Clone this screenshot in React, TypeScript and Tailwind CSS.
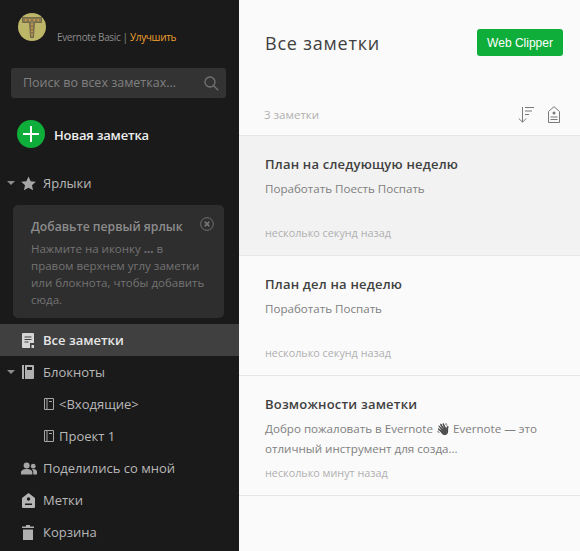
import { ReactNode } from "react";

const Caret = () => (
  <svg width="8" height="4" viewBox="0 0 8 4" className="fill-[#8c8c8c]">
    <path d="M0 0h8L4 4z" />
  </svg>
);

const StarIcon = () => (
  <svg width="15" height="15" viewBox="0 0 16 15" className="fill-[#a6a6a6]">
    <path d="M8 0l2.3 5 5.5.6-4.1 3.7 1.2 5.4L8 12l-4.9 2.7 1.2-5.4L.2 5.600 5.700 5z" />
  </svg>
);

const NotesIcon = () => (
  <svg width="12" height="15" viewBox="0 0 12 15" className="ml-px">
    <path d="M1 0h10a1 1 0 0 1 1 1v9H8v5H1a1 1 0 0 1-1-1V1a1 1 0 0 1 1-1z" fill="#d6d6d6" />
    <path d="M2.500 4h7M2.500 6.500h7M2.500 9h4" stroke="#404040" />
    <path d="M9.500 12H12v3H9.500z" fill="#d6d6d6" />
  </svg>
);

const NotebookIcon = () => (
  <svg width="12" height="14" viewBox="0 0 12 14" className="ml-px fill-[#b0b0b0]">
    <path d="M0 0h2v14H0zM3 0h8a1 1 0 0 1 1 1v12a1 1 0 0 1-1 1H3z" />
    <path d="M5 2h5v3H5z" fill="#1a1a1a" />
  </svg>
);

const SmallNotebook = () => (
  <svg width="10" height="12" viewBox="0 0 10 12" fill="none" stroke="#a6a6a6">
    <path d="M.5.5h9v11h-9zM3 .5v11M5 3.500h3" />
  </svg>
);

const PeopleIcon = () => (
  <svg width="16" height="13" viewBox="0 0 17 13" className="fill-[#a6a6a6]">
    <circle cx="6" cy="3.200" r="3.200" />
    <path d="M0 13v-2.500C0 8.500 2.500 7 6 7s6 1.500 6 3.500V13z" />
    <circle cx="13" cy="4" r="2.500" />
    <path d="M13 13v-3c0-1-.5-2-1.500-2.700.5-.2 1-.3 1.700-.3 2.200 0 3.800 1.200 3.800 3v3z" />
  </svg>
);

const TagIcon = ({ outline }: { outline?: boolean }) =>
  outline ? (
    <svg width="12" height="17" viewBox="0 0 12 17" fill="none" stroke="#7a7a7a">
      <path d="M.5 5.500L6 .7l5.500 4.800v11H.5z" />
      <circle cx="6" cy="7" r="1.500" fill="#7a7a7a" stroke="none" />
      <path d="M2.500 11h7M2.500 13.500h7" />
    </svg>
  ) : (
    <svg width="13" height="15" viewBox="0 0 13 15" className="ml-px">
      <path d="M0 5l6.500-5L13 5v9a1 1 0 0 1-1 1H1a1 1 0 0 1-1-1z" fill="#b5b5b5" />
      <circle cx="6.500" cy="6" r="1.700" fill="#1a1a1a" />
      <path d="M3 10.500h7V12H3z" fill="#1a1a1a" />
    </svg>
  );

const TrashIcon = () => (
  <svg width="12" height="15" viewBox="0 0 12 15" className="ml-px fill-[#b0b0b0]">
    <path d="M4 0h4v1.500h4V3H0V1.500h4zM1 4.500h10V15H1z" />
  </svg>
);

const SidebarRow = ({
  icon,
  label,
  caret,
  active,
}: {
  icon: ReactNode;
  label: string;
  caret?: boolean;
  active?: boolean;
}) => (
  <div
    className={`h-8 flex items-center text-[13px] ${active ? "bg-[#404040] text-[#e6e6e6] font-semibold" : "text-[#b8b8b8]"}`}
  >
    <div className="w-[21px] flex justify-end pr-1.5">{caret && <Caret />}</div>
    <div className="w-[22px] flex justify-start">{icon}</div>
    <span className="pt-0.5">{label}</span>
  </div>
);

const SubRow = ({ label }: { label: string }) => (
  <div className="h-8 flex items-center pl-[44px] gap-[5px] text-[13px] text-[#b8b8b8]">
    <SmallNotebook />
    <span className="pt-0.5">{label}</span>
  </div>
);

const NoteCard = ({
  title,
  body,
  time,
  selected,
}: {
  title: string;
  body: ReactNode;
  time: string;
  selected?: boolean;
}) => (
  <div
    className={`h-[120px] border-b border-[#e6e6e6] pl-[26px] pr-4 pt-[18px] flex flex-col ${selected ? "bg-[#f2f2f2]" : ""}`}
  >
    <div className="text-[13px] tracking-[0.2px] font-semibold text-[#404040] leading-[20px]">{title}</div>
    <div className="text-[11.6px] text-[#808080] leading-[20px] mt-[5px] h-[40px]">{body}</div>
    <div className="text-[10.8px] text-[#b0b0b0] leading-[14px] mt-[7px]">{time}</div>
  </div>
);

export default function App() {
  return (
    <div className="w-[580px] h-[551px] flex overflow-hidden bg-[#fafafa] font-['Open_Sans',sans-serif]">
      <aside className="w-[239px] shrink-0 bg-[#1a1a1a] flex flex-col">
        <div className="h-[68px] pl-[18px] pt-[13px] flex items-start">
          <svg width="28" height="28" viewBox="0 0 28 28">
            <circle cx="14" cy="14" r="14" fill="#bdb668" />
            <path d="M4.500 4.500h19v5h-7l-1 15h-3l-1-15h-7z" fill="#8a7a52" stroke="#5f5544" strokeWidth="0.7" />
            <path d="M7 7h1.500M11 7h1.500M15.500 7h1.500M19.500 7h1.500M14 10.500v1.500M14 14v1.500M14 17.500v1.500M14 21v1.500" stroke="#e0a83a" strokeWidth="1.300" />
          </svg>
          <div className="ml-[11px] mt-[17px] text-[10px] tracking-[-0.35px] leading-[14px] text-[#8c8c8c]">
            Evernote Basic | <span className="text-[#f0a030]">Улучшить</span>
          </div>
        </div>
        <div className="ml-[11px] mr-[13px] h-[30px] bg-[#333333] rounded-[3px] flex items-center pl-3 pr-[7px] justify-between">
          <span className="text-[12.5px] text-[#808080]">Поиск во всех заметках...</span>
          <svg width="15" height="15" viewBox="0 0 15 15" fill="none" stroke="#737373" strokeWidth="1.300">
            <circle cx="6" cy="6" r="5" />
            <path d="M9.700 9.700l4.500 4.500" />
          </svg>
        </div>
        <div className="mt-[22px] pl-[17px] h-7 flex items-center gap-[9px]">
          <div className="w-7 h-7 rounded-full bg-[#0fad39] flex items-center justify-center">
            <svg width="16" height="16" viewBox="0 0 16 16" stroke="#fff" strokeWidth="2">
              <path d="M8 0v16M0 8h16" />
            </svg>
          </div>
          <span className="pt-1 text-[13px] tracking-[-0.2px] font-semibold text-[#ededed]">Новая заметка</span>
        </div>
        <div className="mt-[19px]">
          <SidebarRow icon={<StarIcon />} label="Ярлыки" caret />
        </div>
        <div className="relative mt-[6px] ml-[13px] mr-[15px] h-[113px] bg-[#2e2e2e] rounded-[5px] pl-[18px] pt-[13px]">
          <div className="text-[12.2px] font-semibold text-[#8c8c8c] leading-[17px]">Добавьте первый ярлык</div>
          <div className="text-[11.5px] text-[#737373] leading-[17px] mt-[5px]">
            Нажмите на иконку <b>...</b> в
            <br />
            правом верхнем углу заметки
            <br />
            или блокнота, чтобы добавить
            <br />
            сюда.
          </div>
          <svg
            width="14"
            height="14"
            viewBox="0 0 14 14"
            className="absolute top-[12px] right-[10px]"
            fill="none"
            stroke="#737373"
          >
            <circle cx="7" cy="7" r="6.300" />
            <path d="M4.700 4.700l4.600 4.600M9.300 4.700L4.700 9.300" strokeWidth="1.800" />
          </svg>
        </div>
        <div className="mt-[6px]">
          <SidebarRow icon={<NotesIcon />} label="Все заметки" active />
          <SidebarRow icon={<NotebookIcon />} label="Блокноты" caret />
          <SubRow label="<Входящие>" />
          <SubRow label="Проект 1" />
          <SidebarRow icon={<PeopleIcon />} label="Поделились со мной" />
          <SidebarRow icon={<TagIcon />} label="Метки" />
          <SidebarRow icon={<TrashIcon />} label="Корзина" />
        </div>
      </aside>

      <main className="flex-1 flex flex-col">
        <div className="h-[136px] border-b border-[#e6e6e6] shrink-0">
          <div className="flex items-start justify-between pl-[26px] pr-[17px] pt-[29px]">
            <h1 className="text-[18px] leading-[28px] text-[#404040] tracking-[0.8px]">Все заметки</h1>
            <button className="w-[86px] h-[27px] rounded-[3px] bg-[#0fad39] text-white text-[12px] font-['Liberation_Sans',sans-serif]">
              Web Clipper
            </button>
          </div>
          <div className="flex items-center justify-between pl-[25px] pr-[20px] mt-[49px]">
            <span className="text-[11.5px] text-[#b0b0b0]">3 заметки</span>
            <div className="flex items-center gap-[13px]">
              <svg width="17" height="16" viewBox="0 0 17 16" fill="none" stroke="#7a7a7a">
                <path d="M4.500 0v15M.8 11.500l3.700 3.700 3.700-3.700M7 .5h9M7 4h7M7 7.500h4" />
              </svg>
              <TagIcon outline />
            </div>
          </div>
        </div>
        <NoteCard title="План на следующую неделю" body="Поработать Поесть Поспать" time="несколько секунд назад" selected />
        <NoteCard title="План дел на неделю" body="Поработать Поспать" time="несколько секунд назад" />
        <NoteCard
          title="Возможности заметки"
          body={
            <>
              Добро пожаловать в Evernote <span className="grayscale brightness-[0.4] leading-[14px]">👋</span> Evernote — это
              <br />
              отличный инструмент для созда...
            </>
          }
          time="несколько минут назад"
        />
      </main>
    </div>
  );
}
